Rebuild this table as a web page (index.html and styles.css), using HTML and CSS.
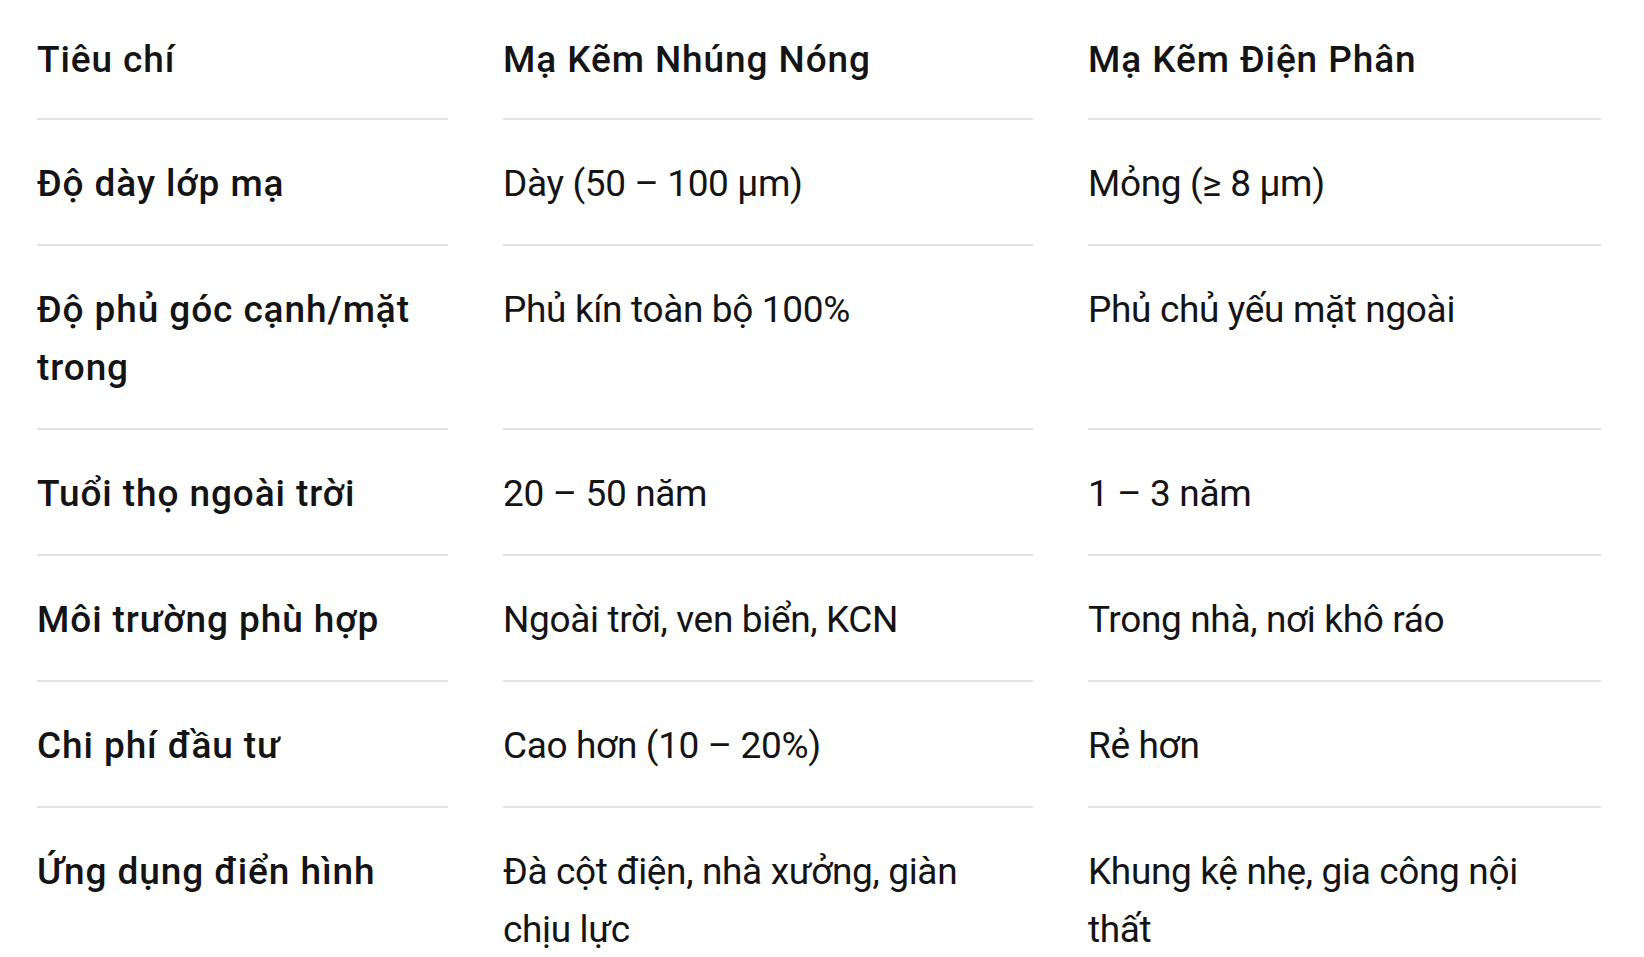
FILE: index.html
```html
<!DOCTYPE html>
<html lang="vi">
<head>
<meta charset="utf-8">
<title>So sánh mạ kẽm</title>
<link rel="stylesheet" href="styles.css">
</head>
<body>
<div class="compare">
  <div class="cell head">Tiêu chí</div>
  <div class="cell head">Mạ Kẽm Nhúng Nóng</div>
  <div class="cell head">Mạ Kẽm Điện Phân</div>

  <div class="cell label">Độ dày lớp mạ</div>
  <div class="cell">Dày (50 – 100 µm)</div>
  <div class="cell">Mỏng (≥ 8 µm)</div>

  <div class="cell label">Độ phủ góc cạnh/mặt trong</div>
  <div class="cell">Phủ kín toàn bộ 100%</div>
  <div class="cell">Phủ chủ yếu mặt ngoài</div>

  <div class="cell label">Tuổi thọ ngoài trời</div>
  <div class="cell">20 – 50 năm</div>
  <div class="cell">1 – 3 năm</div>

  <div class="cell label">Môi trường phù hợp</div>
  <div class="cell">Ngoài trời, ven biển, KCN</div>
  <div class="cell">Trong nhà, nơi khô ráo</div>

  <div class="cell label">Chi phí đầu tư</div>
  <div class="cell">Cao hơn (10 – 20%)</div>
  <div class="cell">Rẻ hơn</div>

  <div class="cell label last">Ứng dụng điển hình</div>
  <div class="cell last">Đà cột điện, nhà xưởng, giàn chịu lực</div>
  <div class="cell last">Khung kệ nhẹ, gia công nội thất</div>
</div>
</body>
</html>
```

FILE: styles.css
```css
html, body {
  margin: 0;
  padding: 0;
  background: #ffffff;
}

body {
  font-family: Roboto, "Noto Sans", "Liberation Sans", sans-serif;
  color: #141414;
  font-size: 37px;
  line-height: 58px;
}

.compare {
  display: grid;
  grid-template-columns: 411px 530px 513px;
  column-gap: 55px;
  padding-left: 37px;
}

.cell {
  padding: 35px 24px 31px 0;
  border-bottom: 2px solid #e2e2e2;
  font-weight: 400;
  letter-spacing: -0.35px;
}

.head {
  padding: 31px 24px 29px 0;
}

.head,
.label {
  font-weight: 500;
  letter-spacing: 0.9px;
}

.last {
  border-bottom: none;
}
```
